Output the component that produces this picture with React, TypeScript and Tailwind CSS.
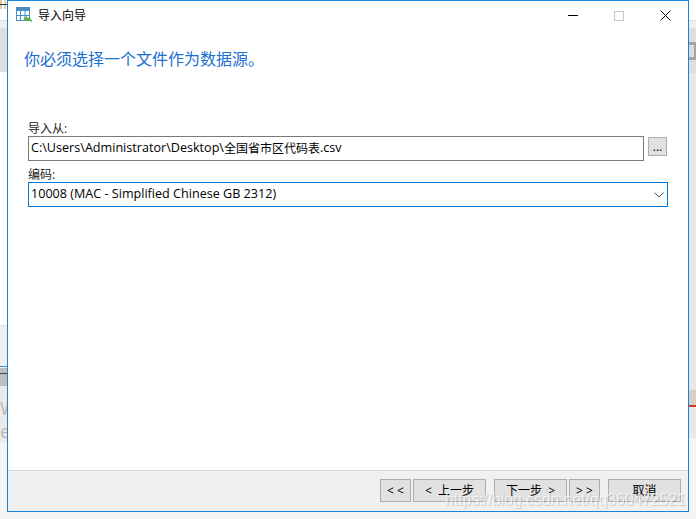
const ui = { fontFamily: '"Open Sans", "Noto Sans CJK SC", sans-serif' };

function AppIcon() {
  return (
    <svg width="17" height="17" viewBox="0 0 17 17" className="shrink-0">
      <rect x="0.5" y="0.5" width="13" height="13" fill="#fff" stroke="#4a8cc4" />
      <rect x="0" y="0" width="14" height="4" fill="#4a8cc4" />
      <path d="M0.5 8.5H13.5M4.5 4V13.5M9 4V13.5" stroke="#4a8cc4" fill="none" />
      <path d="M16 15.5C16 12 14 10.8 11 10.8V9L7.5 11.8L11 14.6V12.9C13 12.9 14.5 13.5 16 15.5Z" fill="#5cb531" />
    </svg>
  );
}

function WizardButton({ label, className }: { label: string; className: string }) {
  return (
    <button className={`h-[23px] bg-[#e1e1e1] border border-[#adadad] text-[12px] text-black flex items-center justify-center ${className}`}>
      {label}
    </button>
  );
}

function LeftStrip() {
  return (
    <div className="w-[7px] shrink-0 flex flex-col overflow-hidden bg-[#f5f5f5]">
      <div className="h-[20px] bg-white flex items-start">
        <svg width="7" height="9" viewBox="0 0 7 9">
          <path d="M1 0V9" stroke="#c89040" fill="none" />
          <path d="M5 0V9" stroke="#d8a050" fill="none" />
          <path d="M0 4.5H7" stroke="#333" fill="none" />
        </svg>
      </div>
      <div className="h-[8px] bg-[#f0f0f0] border-t border-[#dddddd]" />
      <div className="h-[44px] bg-[#dfdfdf]" />
      <div className="h-[253px] bg-white" />
      <div className="h-[41px] bg-[#eeeeee] border-t border-[#dddddd]" />
      <div className="h-px bg-[#3a8fd8]" />
      <div className="h-px bg-[#f0f0f0]" />
      <div className="h-[18px] bg-[#bdbdbd] flex flex-col pt-[5px]">
        <div className="h-px bg-[#444]" />
      </div>
      <div className="h-[57px] bg-[#ebebeb] overflow-hidden pt-[11px] text-[18px] leading-[23px] text-[#b8b8b8]">
        <div className="whitespace-nowrap">W</div>
        <div>e</div>
      </div>
      <div className="flex-1 bg-[#f5f5f5]" />
    </div>
  );
}

function RightStrip() {
  return (
    <div className="w-[7px] shrink-0 flex flex-col overflow-hidden bg-[#e8e8e8]">
      <div className="h-[20px] bg-white" />
      <div className="h-[8px] bg-[#f0f0f0] border-t border-[#dddddd]" />
      <div className="h-[14px] bg-[#dfdfdf]" />
      <div className="h-[18px] bg-[#a4a4a4] py-[3px] pr-[2px]">
        <div className="h-full bg-[#dddddd]" />
      </div>
      <div className="h-[13px] bg-[#dfdfdf]" />
      <div className="h-[332px] bg-[#e8e8e8] flex flex-col justify-end">
        <div className="h-[15px] bg-[#d4d0c8]" />
      </div>
      <div className="h-[2px] bg-[#e03030]" />
      <div className="h-[31px] bg-[#e8e8e8]" />
      <div className="flex-1 bg-[#f5f5f5]" />
    </div>
  );
}

export default function App() {
  return (
    <div className="relative flex w-[696px] h-[519px] overflow-hidden bg-[#f5f5f5]" style={ui}>
      <LeftStrip />
      <div className="w-[682px] h-[512px] shrink-0 flex flex-col bg-white border border-[#1883d7]">
        {/* title bar */}
        <div className="h-[29px] shrink-0 flex items-center">
          <div className="ml-[8px] mr-[5px]"><AppIcon /></div>
          <span className="text-[12px] text-black">导入向导</span>
          <div className="ml-auto flex items-center h-full">
            <div className="w-[46px] h-full flex items-center justify-center">
              <div className="w-[10px] h-px bg-black" />
            </div>
            <div className="w-[46px] h-full flex items-center justify-center">
              <div className="w-[10px] h-[10px] border border-[#c8c8c8]" />
            </div>
            <div className="w-[46px] h-full flex items-center justify-center">
              <svg width="11" height="11" viewBox="0 0 11 11">
                <path d="M0.5 0.5L10.5 10.5M10.5 0.5L0.5 10.5" stroke="#000" fill="none" />
              </svg>
            </div>
          </div>
        </div>

        {/* body */}
        <div className="flex-1 flex flex-col pl-[16px] pr-[20px]">
          <div className="mt-[17px] text-[16px] leading-[24px] text-[#1b6fd0]">你必须选择一个文件作为数据源。</div>

          <div className="mt-[50px] pl-[4px] text-[12px] leading-[15px] text-[#222]">导入从:</div>
          <div className="pl-[4px] flex items-start">
            <div className="w-[616px] h-[25px] border border-[#7a7a7a] pl-[2px] flex items-center text-[12.6px] text-black whitespace-pre">
              <span>C:\Users\Administrator\Desktop\</span>
              <span className="text-[12px]">全国省市区代码表</span>
              <span>.csv</span>
            </div>
            <button className="ml-[4px] mt-[1px] w-[19px] h-[19px] bg-[#e1e1e1] border border-[#adadad] text-[12px] leading-[15px] text-black">
              ...
            </button>
          </div>

          <div className="mt-[6px] pl-[4px] text-[12px] leading-[15px] text-[#222]">编码:</div>
          <div className="ml-[4px] w-[640px] h-[25px] border border-[#0078d7] pl-[2px] pr-[3px] flex items-center justify-between text-[12.6px] text-black">
            <span>10008 (MAC - Simplified Chinese GB 2312)</span>
            <svg width="10" height="6" viewBox="0 0 10 6">
              <path d="M0.5 0.5L5 5L9.5 0.5" stroke="#555" fill="none" />
            </svg>
          </div>
        </div>

        {/* footer */}
        <div className="h-[41px] shrink-0 bg-[#f0f0f0] border-t border-[#d5d5d5] flex items-start pt-[8px] pl-[372px]">
          <WizardButton label="< <" className="w-[31px]" />
          <WizardButton label="<  上一步" className="w-[73px] ml-[2px] whitespace-pre" />
          <WizardButton label="下一步  >" className="w-[73px] ml-[8px] whitespace-pre" />
          <WizardButton label="> >" className="w-[31px] ml-[2px]" />
          <WizardButton label="取消" className="w-[73px] ml-[8px]" />
        </div>
      </div>
      <RightStrip />

      {/* CSDN watermark over the picture */}
      <div
        className="absolute left-[445px] top-[491px] text-[15.7px] leading-[18px] whitespace-nowrap text-white/70 [text-shadow:1px_1px_1px_rgba(0,0,0,0.18)]"
        style={{ fontFamily: '"Liberation Sans", sans-serif' }}
      >
        https://blog.csdn.net/qq360472521
      </div>
    </div>
  );
}
